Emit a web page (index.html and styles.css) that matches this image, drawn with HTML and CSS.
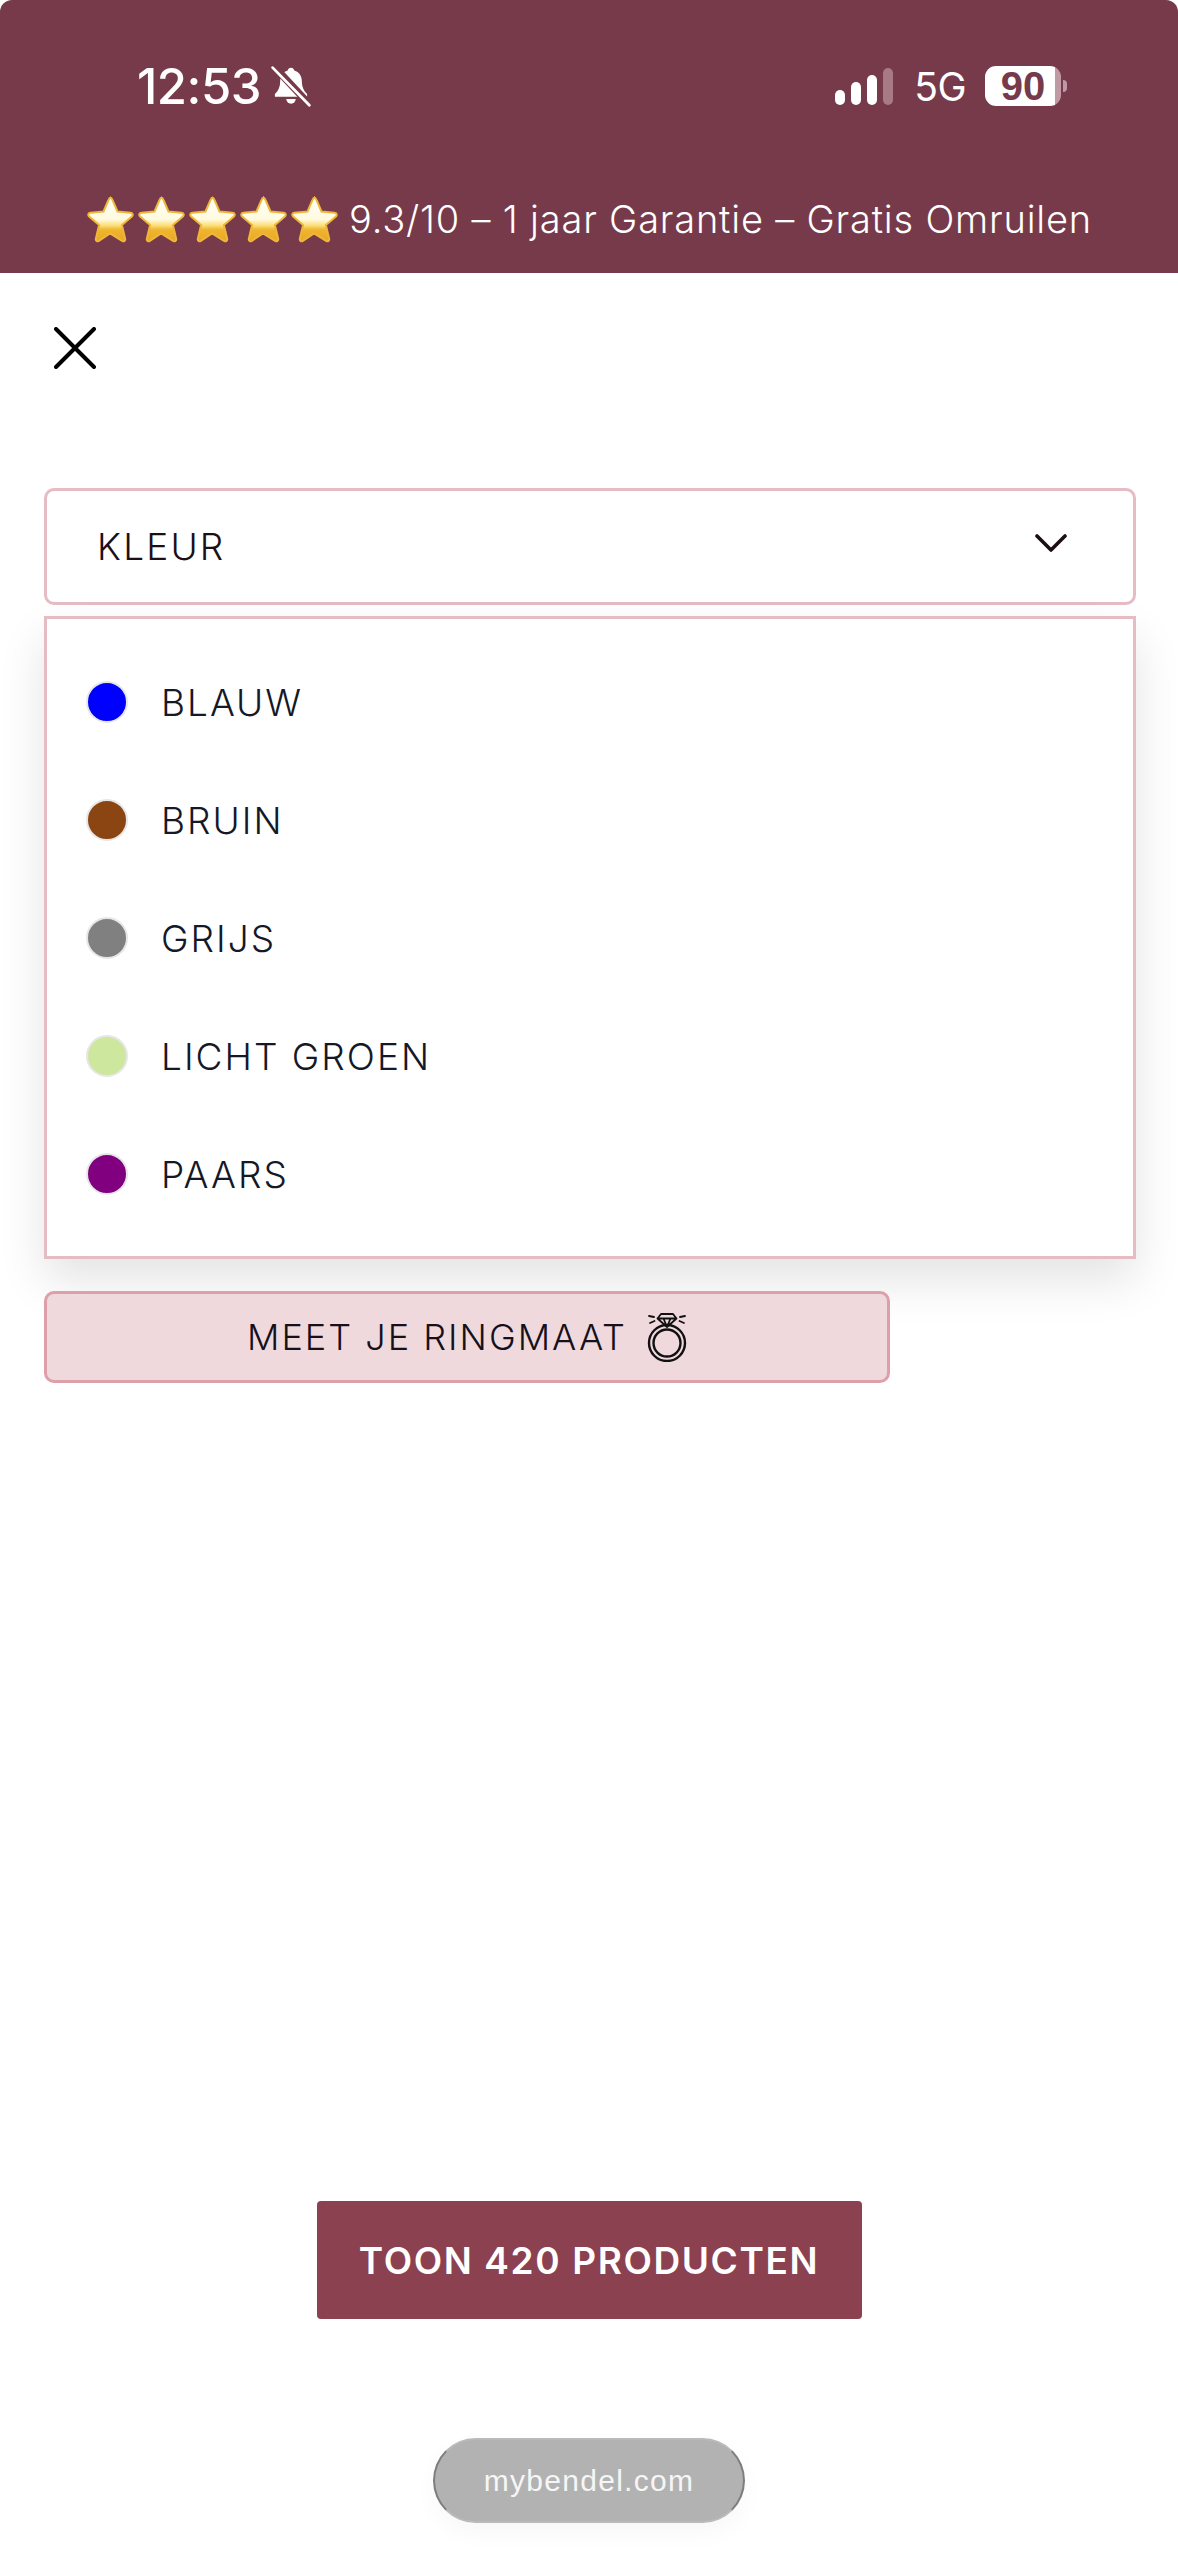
FILE: index.html
```html
<!DOCTYPE html>
<html lang="nl">
<head>
    <meta charset="UTF-8">
    <meta name="viewport" content="width=device-width, initial-scale=1.0">
    <title>Filter - mybendel.com</title>
    <link rel="stylesheet" href="styles.css">
</head>
<body>
    <svg class="defs" width="0" height="0" aria-hidden="true">
        <defs>
            <linearGradient id="star-fill" x1="0" y1="0" x2="0" y2="1">
                <stop offset="0" stop-color="#fffef6"/>
                <stop offset="0.5" stop-color="#fffbe0"/>
                <stop offset="0.64" stop-color="#fbdf78"/>
                <stop offset="0.74" stop-color="#efb52e"/>
                <stop offset="1" stop-color="#e8a822"/>
            </linearGradient>
            <symbol id="star" viewBox="0 0 48 48">
                <path d="M24 2.500c1.300 0 2 1 2.500 2.300l5 11.700 13 1.200c2.200.2 3 2.200 1.400 3.700l-10 8.700 3.200 13.500c.5 2-1.200 3.200-3 2.200L24 38.300 12.900 45.800c-1.800 1-3.500-.2-3-2.200l3.200-13.500-10-8.700c-1.600-1.500-.8-3.500 1.400-3.700l13-1.200 5-11.700c.5-1.300 1.200-2.300 2.500-2.300z" fill="url(#star-fill)" stroke="#eeb63a" stroke-width="2"/>
            </symbol>
        </defs>
    </svg>

    <div class="page">
        <header class="top">
            <div class="status">
                <div class="status-left">
                    <span class="time">12:53</span>
                    <svg class="bell" viewBox="0 0 24 24">
                        <path d="M12 1.500c-1 0-1.700.7-1.900 1.700C7.300 4 5.800 6.500 5.800 9.300c0 3.200-1 5.500-3 7.200v1.700h18.400v-1.700c-2-1.700-3-4-3-7.200 0-2.800-1.500-5.300-4.300-6.100C13.700 2.200 13 1.500 12 1.500z" fill="#fff"/>
                        <path d="M9.300 19.400a2.700 2.700 0 0 0 5.400 0z" fill="#fff"/>
                        <path d="M2 .5 23 23" stroke="#763a4a" stroke-width="4.200"/>
                        <path d="M1.500 1.500 22.500 23" stroke="#fff" stroke-width="1.600" stroke-linecap="round"/>
                    </svg>
                </div>
                <div class="status-right">
                    <div class="signal">
                        <span class="bar bar-1"></span>
                        <span class="bar bar-2"></span>
                        <span class="bar bar-3"></span>
                        <span class="bar bar-4"></span>
                    </div>
                    <span class="network">5G</span>
                    <div class="battery"><span>90</span></div>
                    <span class="battery-nub"></span>
                </div>
            </div>
            <div class="promo">
                <span class="stars">
                    <svg class="star"><use href="#star"/></svg>
                    <svg class="star"><use href="#star"/></svg>
                    <svg class="star"><use href="#star"/></svg>
                    <svg class="star"><use href="#star"/></svg>
                    <svg class="star"><use href="#star"/></svg>
                </span>
                <span>9.3/10 – 1 jaar Garantie – Gratis Omruilen</span>
            </div>
        </header>

        <main class="filters">
            <svg class="close" viewBox="0 0 42 42">
                <path d="M2 2 40 40M40 2 2 40" stroke="#000" stroke-width="4" stroke-linecap="round"/>
            </svg>

            <div class="select">
                <span>KLEUR</span>
                <svg class="chevron" viewBox="0 0 32 20">
                    <path d="M2 3 16 17 30 3" fill="none" stroke="#1c0f14" stroke-width="3.600" stroke-linecap="round" stroke-linejoin="round"/>
                </svg>
            </div>

            <ul class="options">
                <li class="option"><span class="dot dot-blue"></span>BLAUW</li>
                <li class="option"><span class="dot dot-brown"></span>BRUIN</li>
                <li class="option"><span class="dot dot-grey"></span>GRIJS</li>
                <li class="option"><span class="dot dot-green"></span>LICHT GROEN</li>
                <li class="option"><span class="dot dot-purple"></span>PAARS</li>
            </ul>

            <div class="ring-size">
                <span>MEET JE RINGMAAT</span>
                <svg class="ring" viewBox="0 0 40 50" fill="none" stroke="#111" stroke-linecap="round" stroke-linejoin="round">
                    <circle cx="20" cy="31" r="18" stroke-width="2.400"/>
                    <circle cx="20" cy="31" r="13.500" stroke-width="2.400"/>
                    <path d="M14 2h12l3.500 4.500L20 15l-9.500-8.500zM10.500 6.500h19M16.500 6.500 20 15l3.500-8.500" fill="#efd9dd" stroke-width="1.800"/>
                    <path d="M2 4l5 1M3 11l4.500-2M38 4l-5 1M37 11l-4.500-2" stroke-width="1.800"/>
                </svg>
            </div>
        </main>

        <footer class="bottom">
            <button class="show-results">TOON 420 PRODUCTEN</button>
            <div class="site-pill">mybendel.com</div>
        </footer>
    </div>
</body>
</html>
```

FILE: styles.css
```css
* {
    box-sizing: border-box;
}

html, body {
    margin: 0;
    padding: 0;
    background-color: #fff;
}

.defs {
    position: absolute;
}

.page {
    display: flex;
    flex-direction: column;
    min-height: 2560px;
    font-family: Inter, "Liberation Sans", sans-serif;
}

/* top bar */
.top {
    height: 273px;
    padding: 58px 111px 0 86px;
    background-color: #763a4a;
    color: #fff;
    border-radius: 12px 12px 0 0;
}

.status {
    display: flex;
    justify-content: space-between;
    align-items: center;
    height: 56px;
    padding-left: 51px;
}

.status-left {
    display: flex;
    align-items: center;
    gap: 9px;
}

.time {
    font-size: 49px;
    font-weight: 500;
    letter-spacing: -0.5px;
}

.bell {
    width: 42px;
    height: 44px;
}

.status-right {
    display: flex;
    align-items: center;
}

.signal {
    display: flex;
    align-items: flex-end;
    gap: 6px;
    height: 37px;
    margin-right: 21px;
}

.bar {
    width: 10px;
    background-color: #fff;
    border-radius: 5px;
}

.bar-1 { height: 15px; }
.bar-2 { height: 23px; }
.bar-3 { height: 30px; }
.bar-4 { height: 37px; background-color: #a87a86; }

.network {
    font-size: 39px;
    margin-right: 19px;
    letter-spacing: -0.5px;
}

.battery {
    display: flex;
    align-items: center;
    justify-content: center;
    width: 76px;
    height: 40px;
    border-radius: 11px;
    background: linear-gradient(to right, #fff 92%, #bf9aa4 92%);
    color: #763a4a;
    font-family: "Liberation Sans", sans-serif;
    font-size: 40px;
    font-weight: 700;
}

.battery-nub {
    width: 4px;
    height: 12px;
    margin-left: 2px;
    background-color: #bf9aa4;
    border-radius: 0 4px 4px 0;
}

.promo {
    display: flex;
    align-items: center;
    gap: 11px;
    margin-top: 81px;
    font-size: 38px;
    font-weight: 300;
    letter-spacing: 0.8px;
    white-space: nowrap;
}

.stars {
    display: flex;
    gap: 3px;
}

.star {
    width: 48px;
    height: 48px;
}

/* filter panel */
.filters {
    padding: 54px 42px 0 44px;
    color: #1c0f14;
}

.close {
    display: block;
    width: 42px;
    height: 42px;
    margin-left: 10px;
}

.select {
    display: flex;
    justify-content: space-between;
    align-items: center;
    height: 117px;
    margin-top: 119px;
    padding: 0 66px 0 50px;
    border: 3px solid #e6bcc4;
    border-radius: 10px;
    font-size: 37px;
    font-weight: 300;
    letter-spacing: 2.2px;
}

.chevron {
    width: 32px;
    height: 20px;
    margin-top: -8px;
}

.options {
    list-style: none;
    margin: 11px 0 0;
    padding: 24px 0 23px;
    border: 3px solid #e6bcc4;
    background-color: #fff;
    box-shadow: 0 22px 44px rgba(0, 0, 0, 0.11);
}

.option {
    display: flex;
    align-items: center;
    height: 118px;
    padding-left: 39px;
    color: #151827;
    font-size: 37px;
    font-weight: 300;
    letter-spacing: 2px;
}

.dot {
    width: 42px;
    height: 42px;
    margin-right: 33px;
    border: 2px solid #e6e6e6;
    border-radius: 50%;
}

.dot-blue { background-color: #0000ff; }
.dot-brown { background-color: #8b4513; }
.dot-grey { background-color: #808080; }
.dot-green { background-color: #cde89e; }
.dot-purple { background-color: #800080; }

.ring-size {
    position: relative;
    display: flex;
    align-items: center;
    justify-content: center;
    gap: 20px;
    width: 846px;
    height: 92px;
    margin-top: 32px;
    border: 3px solid #dd9fa9;
    border-radius: 10px;
    background-color: #efd9dd;
    color: #15101a;
    font-size: 36px;
    font-weight: 300;
    letter-spacing: 2px;
}

.ring {
    width: 40px;
    height: 50px;
}

/* bottom */
.bottom {
    display: flex;
    flex-direction: column;
    align-items: center;
    margin-top: auto;
    padding-bottom: 37px;
}

.show-results {
    width: 545px;
    height: 118px;
    border: 0;
    border-radius: 4px;
    background-color: #8c4150;
    color: #fff;
    font-family: inherit;
    font-size: 37px;
    font-weight: 600;
    letter-spacing: 1.6px;
}

.site-pill {
    display: flex;
    align-items: center;
    justify-content: center;
    width: 312px;
    height: 85px;
    margin-top: 119px;
    border: 2px solid #bdb9ba;
    border-left-color: #7d7d7d;
    border-right-color: #7d7d7d;
    border-radius: 43px;
    background-color: #b2b2b2;
    color: #f6f6f6;
    font-family: "Liberation Sans", sans-serif;
    font-size: 30px;
    letter-spacing: 1.3px;
    box-shadow: 0 10px 24px rgba(0, 0, 0, 0.03);
}
```
